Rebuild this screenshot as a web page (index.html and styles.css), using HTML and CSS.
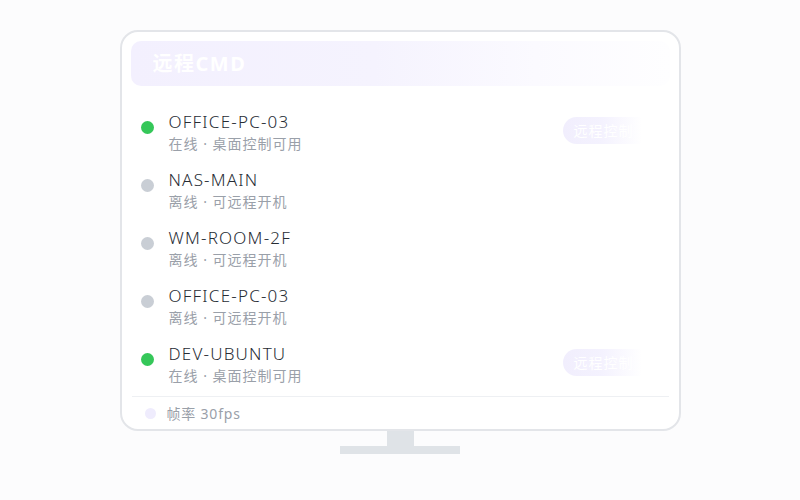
FILE: index.html
```html
<!DOCTYPE html>
<html lang="zh">
<head>
<meta charset="utf-8">
<link rel="stylesheet" href="styles.css">
</head>
<body>
<div class="scene">
  <div class="monitor">
    <div class="header"><span class="title">远程CMD</span></div>
    <div class="list">
      <div class="row">
        <span class="dot on"></span>
        <div class="info"><div class="name">OFFICE-PC-03</div><div class="sub">在线 · 桌面控制可用</div></div>
        <span class="btn">远程控制</span>
      </div>
      <div class="row">
        <span class="dot off"></span>
        <div class="info"><div class="name">NAS-MAIN</div><div class="sub">离线 · 可远程开机</div></div>
      </div>
      <div class="row">
        <span class="dot off"></span>
        <div class="info"><div class="name">WM-ROOM-2F</div><div class="sub">离线 · 可远程开机</div></div>
      </div>
      <div class="row">
        <span class="dot off"></span>
        <div class="info"><div class="name">OFFICE-PC-03</div><div class="sub">离线 · 可远程开机</div></div>
      </div>
      <div class="row">
        <span class="dot on"></span>
        <div class="info"><div class="name">DEV-UBUNTU</div><div class="sub">在线 · 桌面控制可用</div></div>
        <span class="btn">远程控制</span>
      </div>
    </div>
    <div class="divider"></div>
    <div class="footer"><span class="fdot"></span><span class="ftext">帧率 30fps</span></div>
  </div>
  <div class="neck"></div>
  <div class="base"></div>
</div>
</body>
</html>
```
FILE: styles.css
```css
html, body {
  margin: 0;
  padding: 0;
}
body {
  background: #fcfcfd;
  width: 800px;
  height: 500px;
  overflow: hidden;
  font-family: "Noto Sans", "Noto Sans CJK SC", sans-serif;
}
.scene {
  display: flex;
  flex-direction: column;
  align-items: center;
  padding-top: 30px;
}
.monitor {
  box-sizing: border-box;
  width: 561px;
  height: 401px;
  border: 2px solid #e3e5e9;
  border-radius: 18px;
  background: #ffffff;
  padding: 9px 9px 0 9px;
  display: flex;
  flex-direction: column;
}
.header {
  height: 45px;
  border-radius: 10px;
  background: linear-gradient(90deg, #f3f0fe 0%, #f5f3fe 45%, #fbfaff 75%, #fefeff 100%);
  display: flex;
  align-items: center;
  padding-left: 22px;
}
.title {
  color: #ffffff;
  font-size: 20px;
  font-weight: 700;
  line-height: 24px;
  letter-spacing: 1.5px;
}
.list {
  padding-top: 18px;
  display: flex;
  flex-direction: column;
}
.row {
  height: 58px;
  display: flex;
  align-items: center;
  padding-left: 10px;
}
.dot {
  width: 13px;
  height: 13px;
  border-radius: 50%;
  flex: none;
  align-self: flex-start;
  margin-top: 17px;
}
.dot.on { background: #35c759; }
.dot.off { background: #c9ced5; }
.info {
  margin-left: 15px;
  display: flex;
  flex-direction: column;
}
.name {
  font-size: 17px;
  line-height: 22px;
  color: #272c34;
  font-weight: 300;
  letter-spacing: 1.2px;
}
.sub {
  font-size: 14px;
  line-height: 22px;
  color: #9aa0a9;
  letter-spacing: 1px;
}
.btn {
  margin-left: auto;
  margin-right: 19px;
  width: 88px;
  height: 27px;
  box-sizing: border-box;
  padding-left: 11px;
  border-radius: 14px;
  background: linear-gradient(90deg, #f1eefd 0%, #f4f2fe 45%, rgba(255,255,255,0) 90%);
  color: #ffffff;
  font-size: 14px;
  line-height: 27px;
  margin-top: -5px;
  white-space: nowrap;
  overflow: hidden;
  letter-spacing: 1px;
}
.divider {
  height: 1px;
  background: #eef0f3;
  margin: 2px 1px 0 1px;
}
.footer {
  flex: 1;
  display: flex;
  align-items: center;
  padding-left: 14px;
}
.fdot {
  width: 11px;
  height: 11px;
  border-radius: 50%;
  background: #efecfd;
}
.ftext {
  margin-left: 11px;
  font-size: 14px;
  color: #9aa0a9;
  letter-spacing: 0.8px;
}
.neck {
  width: 27px;
  height: 15px;
  background: #dfe3e7;
  margin-left: 1px;
}
.base {
  width: 120px;
  height: 8px;
  background: #dfe3e7;
}
```
